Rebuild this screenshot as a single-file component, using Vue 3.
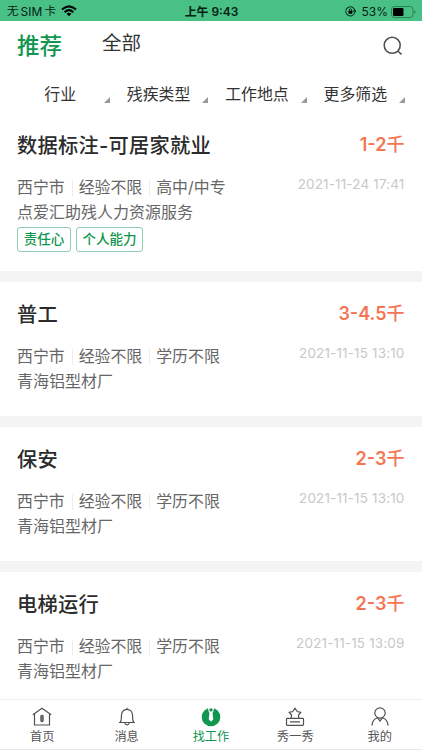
<script setup>
const filters = ['行业', '残疾类型', '工作地点', '更多筛选']
const jobs = [
  { title: '数据标注-可居家就业', pay: '1-2', edu: '高中/中专', company: '点爱汇助残人力资源服务', time: '2021-11-24 17:41', tags: ['责任心', '个人能力'] },
  { title: '普工', pay: '3-4.5', edu: '学历不限', company: '青海铝型材厂', time: '2021-11-15 13:10', tags: [] },
  { title: '保安', pay: '2-3', edu: '学历不限', company: '青海铝型材厂', time: '2021-11-15 13:10', tags: [] },
  { title: '电梯运行', pay: '2-3', edu: '学历不限', company: '青海铝型材厂', time: '2021-11-15 13:09', tags: [] },
]
</script>

<template>
  <div class="screen">
    <header class="status">
      <div class="carrier">
        <span>无</span><span class="sim">SIM</span><span>卡</span>
        <svg class="wifi" viewBox="0 0 16 12" width="16" height="12">
          <path d="M1 4.6Q8-2 15 4.6M3.6 7.2Q8 3.2 12.4 7.2" fill="none" stroke="#000" stroke-width="2.1" />
          <path d="M5.5 8.7Q8 6.6 10.5 8.7L8 11.3Z" />
        </svg>
      </div>
      <div class="clock">上午 9:43</div>
      <div class="power">
        <svg viewBox="0 0 12 12" width="11" height="11">
          <path d="M10.2 8.3A5 5 0 1 1 10.8 5M9.3 5.3h2.8l-1.4 2z" fill="none" stroke="#07331c" stroke-width="1.1" />
          <rect x="3.8" y="5.3" width="4.2" height="3.2" rx=".5" />
          <path d="M4.7 5.5V4.3a1.2 1.2 0 0 1 2.4 0v1.2" fill="none" stroke="#000" stroke-width=".8" />
        </svg>
        <span class="percent">53%</span>
        <svg viewBox="0 0 25 12" width="25" height="12">
          <rect x=".5" y=".5" width="21.5" height="11" rx="2.8" fill="none" stroke="#2c8153" />
          <rect x="2" y="2" width="10.5" height="8" rx="1.2" />
          <path d="M23.3 4v4q1.3-.6 1.3-2t-1.3-2" fill="#2c8153" />
        </svg>
      </div>
    </header>

    <nav class="tabs">
      <span class="tab active">推荐</span>
      <span class="tab">全部</span>
      <svg class="search" viewBox="0 0 20 20" width="20" height="20" fill="none" stroke="#505050" stroke-width="1.6">
        <circle cx="9.2" cy="9.3" r="8" /><path d="m14.6 15 4 3.4" />
      </svg>
    </nav>

    <div class="filters">
      <div v-for="f in filters" :key="f" class="filter">
        <span>{{ f }}</span>
        <svg viewBox="0 0 6 6" width="6" height="6"><path d="M6 0v6H0z" fill="#999" /></svg>
      </div>
    </div>

    <main class="list">
      <article v-for="(job, i) in jobs" :key="i" class="job" :class="{ tagged: job.tags.length }">
        <div class="row">
          <h2>{{ job.title }}</h2>
          <div class="pay">{{ job.pay }}<span>千</span></div>
        </div>
        <div class="row info">
          <div class="meta"><span>西宁市</span><span>经验不限</span><span>{{ job.edu }}</span></div>
          <time>{{ job.time }}</time>
        </div>
        <div class="company">{{ job.company }}</div>
        <div v-if="job.tags.length" class="tags">
          <span v-for="t in job.tags" :key="t">{{ t }}</span>
        </div>
      </article>
    </main>

    <footer class="bar">
      <div class="item">
        <svg viewBox="0 0 20 20" width="20" height="20">
          <path d="M.8 7.8 10 1.3l9.2 6.5M2.5 6.7V18h15V6.7" />
          <rect x="8.9" y="8.3" width="2.2" height="6.4" rx="1.1" fill="#888" />
        </svg>
        <span>首页</span>
      </div>
      <div class="item">
        <svg viewBox="0 0 20 20" width="20" height="20">
          <path d="M10 .8v1.4M2 15.5h16M3.2 15.3c1.4-1.3 1.2-3 1.2-6.2C4.4 5 6.7 2.3 10 2.3s5.6 2.7 5.6 6.8c0 3.2-.2 4.900 1.200 6.200M7.800 16c.4 2.600 4 2.600 4.400 0" />
        </svg>
        <span>消息</span>
      </div>
      <div class="item current">
        <svg viewBox="0 0 20 20" width="20" height="20">
          <circle cx="10" cy="10" r="9.3" fill="#119650" stroke="none" />
          <path d="M6.8 0h6.4l-.8 4.5-.9 1.5.8 6.3L10 14.8l-2.300-2.500.8-6.300-.9-1.500z" fill="#fff" stroke="none" />
          <circle cx="10" cy="2.9" r="1.7" fill="#119650" stroke="none" />
        </svg>
        <span>找工作</span>
      </div>
      <div class="item">
        <svg viewBox="0 0 20 20" width="20" height="20">
          <path d="M6.2 11.2 6.5 8 4.2 5.3l3.500-.8L10 1.200l2.300 3.300 3.500.8L13.500 8l.3 3.200M5 14.900h10" />
          <rect x="1.5" y="11.4" width="17" height="6.9" rx=".8" />
        </svg>
        <span>秀一秀</span>
      </div>
      <div class="item">
        <svg viewBox="0 0 20 20" width="20" height="20">
          <circle cx="10" cy="6" r="5.2" />
          <path d="M2 18.5c.2-4.300 2-6.500 5.600-7.700L10 14l2.400-3.200c3.600 1.200 5.400 3.400 5.600 7.700" />
        </svg>
        <span>我的</span>
      </div>
    </footer>
  </div>
</template>

<style>
body { margin: 0; background: #fff; }
</style>

<style scoped>
.screen { width: 422px; height: 750px; overflow: hidden; display: flex; flex-direction: column; background: #fff; font-family: Inter, "Noto Sans CJK SC", sans-serif; color: #333; white-space: nowrap; }
svg { display: block; flex: none; }
.status { height: 21px; flex: none; display: grid; grid-template-columns: 1fr auto 1fr; align-items: center; box-sizing: border-box; padding: 0 6px 0 7px; background: #49c186; color: #062014; font-size: 12px; line-height: 21px; }
.carrier, .power { display: flex; align-items: center; }
.carrier { font-size: 11.5px; padding-top: 1px; }
.sim { font-size: 12px; margin: 0 2px 0 2px; letter-spacing: .1px; }
.wifi { margin: 0 0 2px 5px; }
.clock { font-weight: 600; font-size: 11.9px; color: #062014; padding-top: 1px; }
.power { justify-content: flex-end; padding-top: 1px; }
.percent { margin: 0 3px 0 6px; font-size: 12px; }
.tabs { height: 49px; flex: none; display: flex; align-items: center; padding: 0 19px 0 17px; }
.tab { font-size: 19.5px; line-height: 30px; margin-bottom: 5px; }
.tab.active { font-size: 22.5px; font-weight: 500; color: #119650; margin: 0 40px 0 0; }
.search { margin: 1px 0 0 auto; }
.filters { height: 46px; flex: none; display: grid; grid-template-columns: repeat(4, 98.4px); padding-left: 11.5px; }
.filter { display: grid; grid-template-columns: 1fr 6px; align-items: center; font-size: 15.9px; text-align: center; }
.filter svg { margin-top: 13px; }
.filter span { padding-left: 5px; }
.list { flex: none; height: 583px; overflow: hidden; }
.job { box-sizing: border-box; height: 145.1px; padding: 18px 17.5px 0 17px; border-bottom: 11px solid #f4f4f4; }
.job.tagged { height: 166px; padding-top: 15px; }
.row { display: flex; justify-content: space-between; align-items: center; }
h2 { margin: 0; padding-top: 1px; font-size: 20.25px; letter-spacing: .25px; line-height: 28px; font-weight: 500; color: #2b2b2b; }
.pay { font-size: 18px; font-weight: 600; line-height: 28px; margin-bottom: 1px; color: #f57452; }
.pay span { font-weight: 500; }
.info { height: 25px; margin-top: 15px; }
.meta { display: flex; align-items: center; font-size: 15.9px; line-height: 25px; color: #666; }
.meta span + span { margin-left: 7px; padding-left: 7px; background: linear-gradient(#eee, #eee) 0 60% / 1px 16px no-repeat; }
time { font-size: 13.5px; letter-spacing: .15px; line-height: 20px; margin-bottom: 7px; color: #c8c8c8; }
.company { font-size: 16px; line-height: 25px; color: #666; }
.tags { display: flex; gap: 5px; margin-top: 2px; }
.tags span { box-sizing: border-box; height: 25px; padding: 0 5.7px; border: 1px solid #90ceb0; border-radius: 3px; color: #119650; font-size: 13.5px; font-weight: 500; line-height: 23px; }
.bar { height: 51px; flex: none; box-sizing: border-box; display: grid; grid-template-columns: repeat(5, 84.4px); border-top: 1px solid #eee; border-bottom: 1px solid #e8e8e8; background: #fff; }
.item { display: flex; flex-direction: column; align-items: center; padding-top: 7px; font-size: 12.2px; line-height: 20px; color: #555; }
.item svg { fill: none; stroke: #505050; stroke-width: 1.2; }
.item.current { color: #119650; }
</style>
